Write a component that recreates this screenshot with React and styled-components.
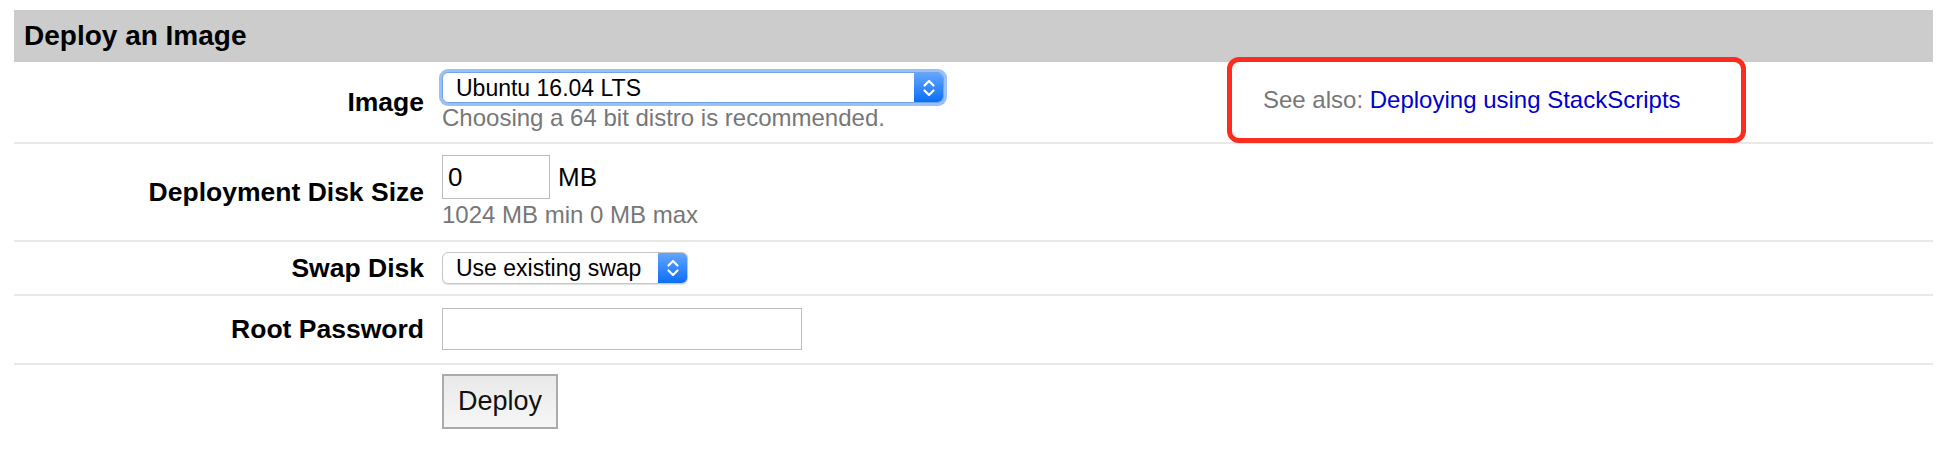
import React from 'react';
import styled, { createGlobalStyle } from 'styled-components';

const GlobalStyle = createGlobalStyle`
  body {
    margin: 0;
    background: #fff;
    font-family: 'Liberation Sans', Arial, Helvetica, sans-serif;
    color: #000;
  }
`;

function Chevrons() {
  return (
    <svg width="14" height="22" viewBox="0 0 14 22" fill="none">
      <path d="M2.5 8.5 L7 4 L11.5 8.5" stroke="#fff" strokeWidth="2.2" strokeLinecap="round" strokeLinejoin="round" />
      <path d="M2.5 13.5 L7 18 L11.5 13.5" stroke="#fff" strokeWidth="2.2" strokeLinecap="round" strokeLinejoin="round" />
    </svg>
  );
}

function Select({ value, width, height, focused, options }) {
  return (
    <SelectBox $width={width} $height={height} $focused={focused}>
      <NativeSelect defaultValue={value}>
        {options.map(o => (
          <option key={o}>{o}</option>
        ))}
      </NativeSelect>
      <ArrowPart>
        <Chevrons />
      </ArrowPart>
    </SelectBox>
  );
}

export default function App() {
  return (
    <Page>
      <GlobalStyle />
      <Header>Deploy an Image</Header>

      <Row>
        <Label>Image</Label>
        <Field $top={10} $bottom={12}>
          <Select
            value="Ubuntu 16.04 LTS"
            width={502}
            height={31}
            focused
            options={['Ubuntu 16.04 LTS', 'Ubuntu 14.04 LTS', 'Debian 9', 'CentOS 7']}
          />
          <Help $gap={3}>Choosing a 64 bit distro is recommended.</Help>
        </Field>
        <SeeAlso>
          <span>See also:</span>&nbsp;<a href="#stackscripts">Deploying using StackScripts</a>
        </SeeAlso>
      </Row>

      <Row>
        <Label>Deployment Disk Size</Label>
        <Field $top={11} $bottom={13}>
          <Inline>
            <TextInput type="text" defaultValue="0" $width={108} $height={44} />
            <Unit>MB</Unit>
          </Inline>
          <Help $gap={4}>1024 MB min 0 MB max</Help>
        </Field>
      </Row>

      <Row>
        <Label>Swap Disk</Label>
        <Field $top={10} $bottom={10}>
          <Select
            value="Use existing swap"
            width={246}
            height={32}
            options={['Use existing swap', 'Create new swap']}
          />
        </Field>
      </Row>

      <Row>
        <Label>Root Password</Label>
        <Field $top={12} $bottom={13}>
          <TextInput type="password" $width={360} $height={42} />
        </Field>
      </Row>

      <Row $last>
        <Label />
        <Field $top={9} $bottom={20}>
          <DeployButton type="button">Deploy</DeployButton>
        </Field>
      </Row>
    </Page>
  );
}

const Page = styled.div`
  padding: 10px 21px 0 14px;
`;

const Header = styled.div`
  display: flex;
  align-items: center;
  height: 52px;
  padding-left: 10px;
  background: #cccccc;
  font-size: 28px;
  font-weight: bold;
  color: #000;
`;

const Row = styled.div`
  display: grid;
  grid-template-columns: 428px 785px 519px 1fr;
  border-bottom: ${p => (p.$last ? 'none' : '2px solid #e8e8e8')};
`;

const Label = styled.div`
  align-self: center;
  padding-right: 18px;
  text-align: right;
  font-size: 26.5px;
  font-weight: bold;
  color: #000;
`;

const Field = styled.div`
  display: flex;
  flex-direction: column;
  align-items: flex-start;
  padding-top: ${p => p.$top}px;
  padding-bottom: ${p => p.$bottom}px;
`;

const Inline = styled.div`
  display: flex;
  align-items: center;
`;

const SelectBox = styled.div`
  display: flex;
  box-sizing: border-box;
  width: ${p => p.$width}px;
  height: ${p => p.$height}px;
  border: 1px solid ${p => (p.$focused ? '#6ea3ee' : '#c6c6c6')};
  border-radius: 6px;
  background: #fff;
  overflow: hidden;
  box-shadow: ${p =>
    p.$focused ? '0 0 0 3px #9cc0f4' : '0 1px 1px rgba(0, 0, 0, 0.12)'};
`;

const NativeSelect = styled.select`
  flex: 1;
  min-width: 0;
  appearance: none;
  -webkit-appearance: none;
  border: none;
  outline: none;
  background: transparent;
  padding: 0 0 0 13px;
  font-family: 'Liberation Sans', Arial, Helvetica, sans-serif;
  font-size: 23px;
  color: #000;
`;

const ArrowPart = styled.span`
  display: flex;
  align-items: center;
  justify-content: center;
  width: 29px;
  background: linear-gradient(#62a6ff, #0b6ef6);
`;

const Help = styled.div`
  margin-top: ${p => p.$gap}px;
  font-size: 24px;
  line-height: 24px;
  color: #777;
`;

const TextInput = styled.input`
  box-sizing: border-box;
  width: ${p => p.$width}px;
  height: ${p => p.$height}px;
  margin: 0;
  padding: 0 5px;
  border: 1px solid #bdbdbd;
  border-radius: 0;
  outline: none;
  font-family: 'Liberation Sans', Arial, Helvetica, sans-serif;
  font-size: 26px;
  color: #000;
`;

const Unit = styled.span`
  margin-left: 8px;
  font-size: 26px;
  color: #000;
`;

const SeeAlso = styled.div`
  position: relative;
  z-index: 1;
  display: flex;
  align-items: center;
  box-sizing: border-box;
  height: 86px;
  margin: -5px 0 -1px;
  padding-left: 31px;
  border: 5px solid #fc2c1f;
  border-radius: 12px;
  font-size: 24px;
  color: #777;
  a {
    color: #0000cc;
    text-decoration: none;
  }
`;

const DeployButton = styled.button`
  box-sizing: border-box;
  width: 116px;
  height: 55px;
  border: 2px solid #ababab;
  border-radius: 0;
  background: linear-gradient(#e9e9e9, #f6f6f6);
  font-family: 'Liberation Sans', Arial, Helvetica, sans-serif;
  font-size: 27px;
  color: #111;
  padding: 0;
`;
